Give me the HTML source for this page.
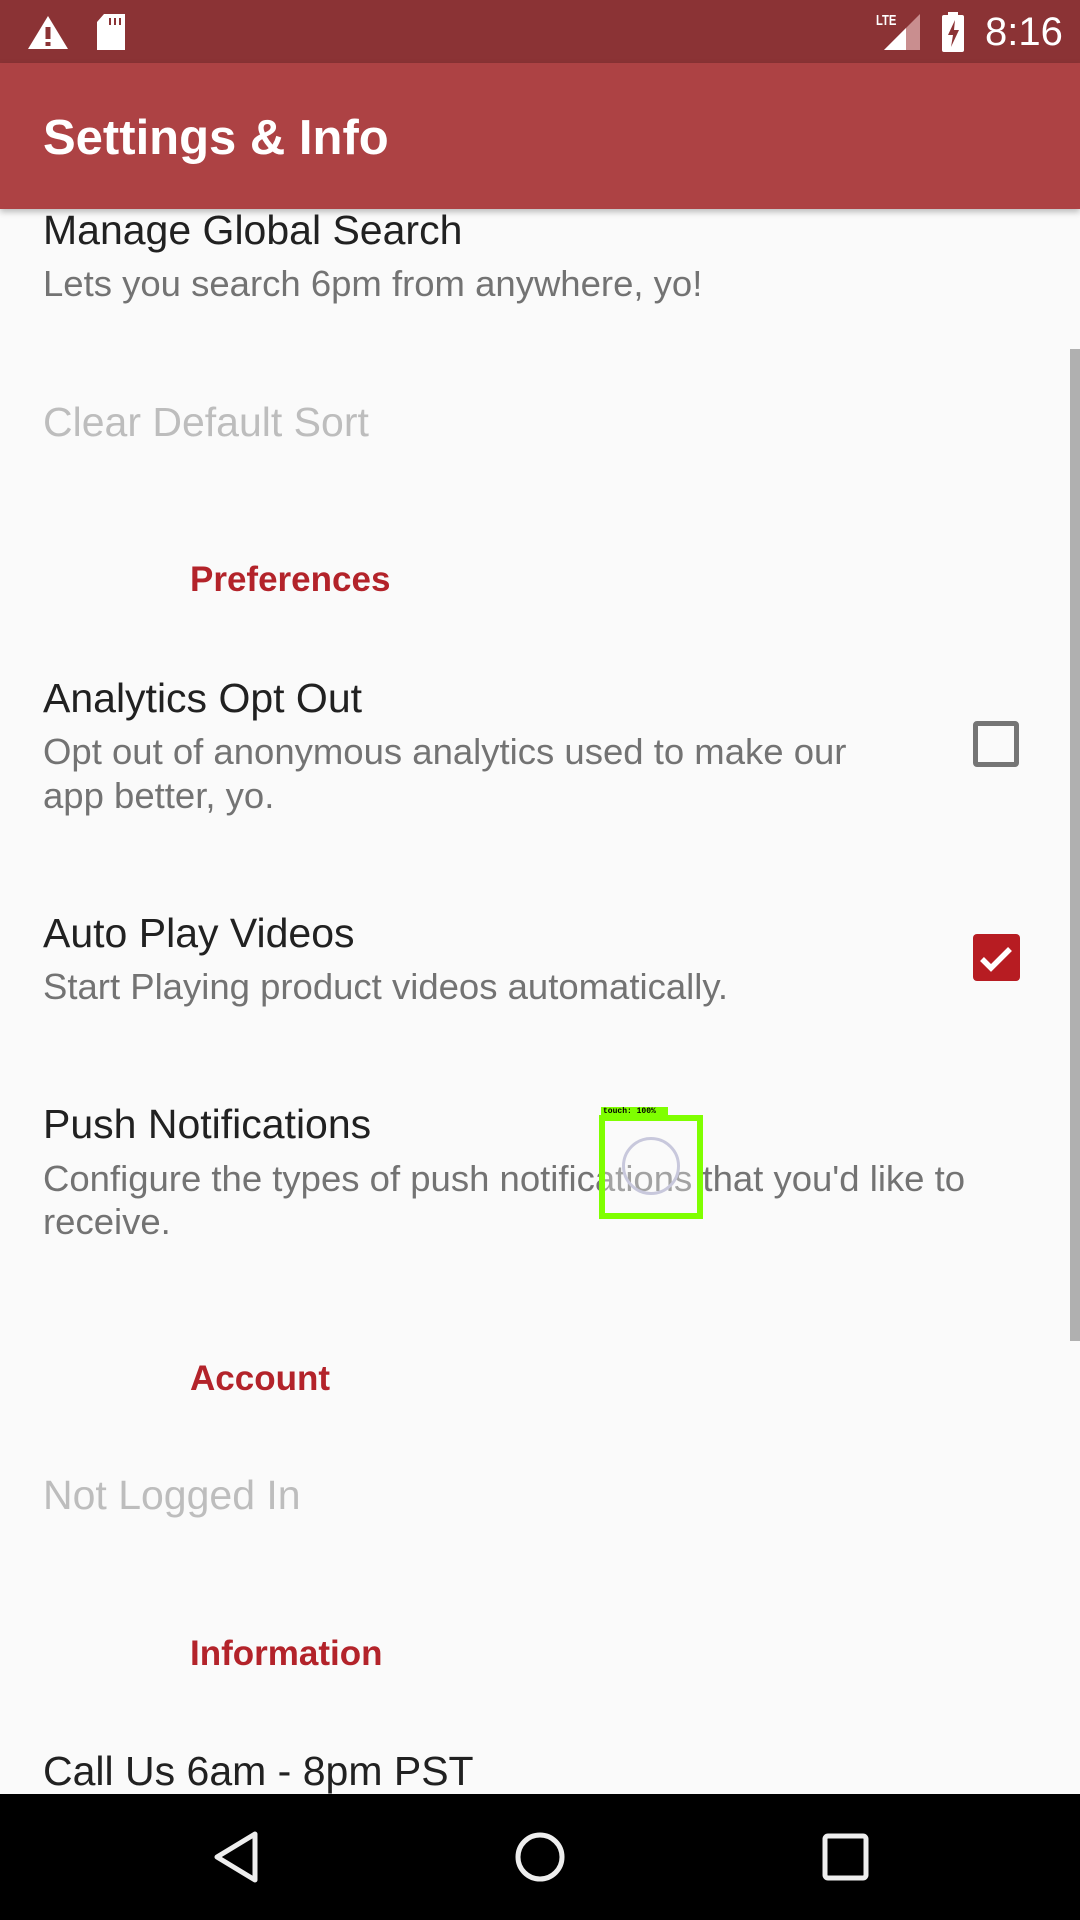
<!DOCTYPE html>
<html><head><meta charset="utf-8"><style>
*{margin:0;padding:0;box-sizing:border-box}
body{width:1080px;height:1920px;position:relative;overflow:hidden;background:#fafafa;font-family:"Liberation Sans",sans-serif}
.t{position:absolute;left:43px;white-space:nowrap;line-height:50px}
.p{font-size:41px;color:#212121}
.s{font-size:36.5px;color:#737373}
.d{font-size:41px;color:#bdbdbd}
.c{font-size:35px;color:#b3232a;font-weight:bold;left:190px}
</style></head><body>
<div class="t p" style="top:205px">Manage Global Search</div>
<div class="t s" style="top:259px">Lets you search 6pm from anywhere, yo!</div>
<div class="t d" style="top:397px">Clear Default Sort</div>
<div class="t c" style="top:555px">Preferences</div>
<div class="t p" style="top:673px">Analytics Opt Out</div>
<div class="t s" style="top:727px">Opt out of anonymous analytics used to make our</div>
<div class="t s" style="top:771px">app better, yo.</div>
<div style="position:absolute;left:973px;top:721px;width:46px;height:46px;border:5px solid #757575;border-radius:4px"></div>
<div class="t p" style="top:908px">Auto Play Videos</div>
<div class="t s" style="top:962px">Start Playing product videos automatically.</div>
<div style="position:absolute;left:973px;top:934px;width:47px;height:47px;background:#b71c22;border-radius:4px">
<svg width="47" height="47" viewBox="0 0 47 47"><path d="M9 25l9 9 19-19" fill="none" stroke="#fff" stroke-width="5.5"/></svg></div>
<div class="t p" style="top:1099px">Push Notifications</div>
<div class="t s" style="top:1154px">Configure the types of push notifications that you'd like to</div>
<div class="t s" style="top:1197px">receive.</div>
<div class="t c" style="top:1354px">Account</div>
<div class="t d" style="top:1470px">Not Logged In</div>
<div class="t c" style="top:1629px">Information</div>
<div class="t p" style="top:1746px">Call Us 6am - 8pm PST</div>
<div style="position:absolute;left:1070px;top:349px;width:10px;height:992px;background:#b0b0b0"></div>
<!-- touch overlay -->
<div style="position:absolute;left:601px;top:1107px;width:67px;height:9px;background:#7fff00;font:bold 8px 'Liberation Mono',monospace;color:#000;line-height:9px;padding-left:2px">touch: 100%</div>
<div style="position:absolute;left:599px;top:1115px;width:104px;height:104px;border:6px solid #7fff00;background:rgba(250,250,250,.35)"></div>
<div style="position:absolute;left:622px;top:1137px;width:58px;height:58px;border:3px solid #c8c8dc;border-radius:50%"></div>
<!-- app bar -->
<div style="position:absolute;left:0;top:0;width:1080px;height:63px;background:#8b3335"></div>
<div style="position:absolute;left:0;top:63px;width:1080px;height:146px;background:#ad4244;box-shadow:0 3px 6px rgba(0,0,0,.25)"></div>
<div style="position:absolute;left:43px;top:108px;font-size:49px;color:#fff;font-weight:bold;line-height:60px">Settings &amp; Info</div>
<!-- status icons -->
<svg style="position:absolute;left:26px;top:14px" width="44" height="36" viewBox="0 0 44 36"><path d="M22 2L42 35H2Z" fill="#fff"/><rect x="19.5" y="13" width="5" height="12" fill="#8b3335"/><rect x="19.5" y="28" width="5" height="4" fill="#8b3335"/></svg>
<svg style="position:absolute;left:94px;top:13px" width="34" height="38" viewBox="0 0 34 38"><path d="M10 1H31V37H3V9Z" fill="#fff"/><rect x="15" y="5" width="2" height="7" fill="#8b3335"/><rect x="20" y="5" width="2" height="7" fill="#8b3335"/><rect x="25" y="5" width="2" height="7" fill="#8b3335"/></svg>
<div style="position:absolute;left:876px;top:12px;font-size:15px;font-weight:bold;color:#fff;transform:scaleX(.75);transform-origin:left">LTE</div>
<svg style="position:absolute;left:884px;top:14px" width="38" height="36" viewBox="0 0 38 36"><path d="M36 0V36H0Z" fill="#c98e8f"/><path d="M22 14V36H0Z" fill="#fff"/></svg>
<svg style="position:absolute;left:942px;top:12px" width="22" height="40" viewBox="0 0 22 40"><rect x="6" y="0" width="10" height="4" fill="#fff"/><rect x="0" y="3" width="22" height="37" rx="2" fill="#fff"/><path d="M13 8L6 23h5l-2 12 8-17h-5z" fill="#8b3335"/></svg>
<div style="position:absolute;left:985px;top:8px;font-size:40px;color:#fff;line-height:48px">8:16</div>
<!-- nav bar -->
<div style="position:absolute;left:0;top:1794px;width:1080px;height:126px;background:#000"></div>
<svg style="position:absolute;left:0;top:1794px" width="1080" height="126" viewBox="0 0 1080 126"><path d="M255 40V86L217 63Z" fill="none" stroke="#eee" stroke-width="5" stroke-linejoin="round"/><circle cx="540" cy="63" r="22" fill="none" stroke="#eee" stroke-width="5"/><rect x="825" y="42" width="41" height="42" rx="3" fill="none" stroke="#eee" stroke-width="5"/></svg>
</body></html>
